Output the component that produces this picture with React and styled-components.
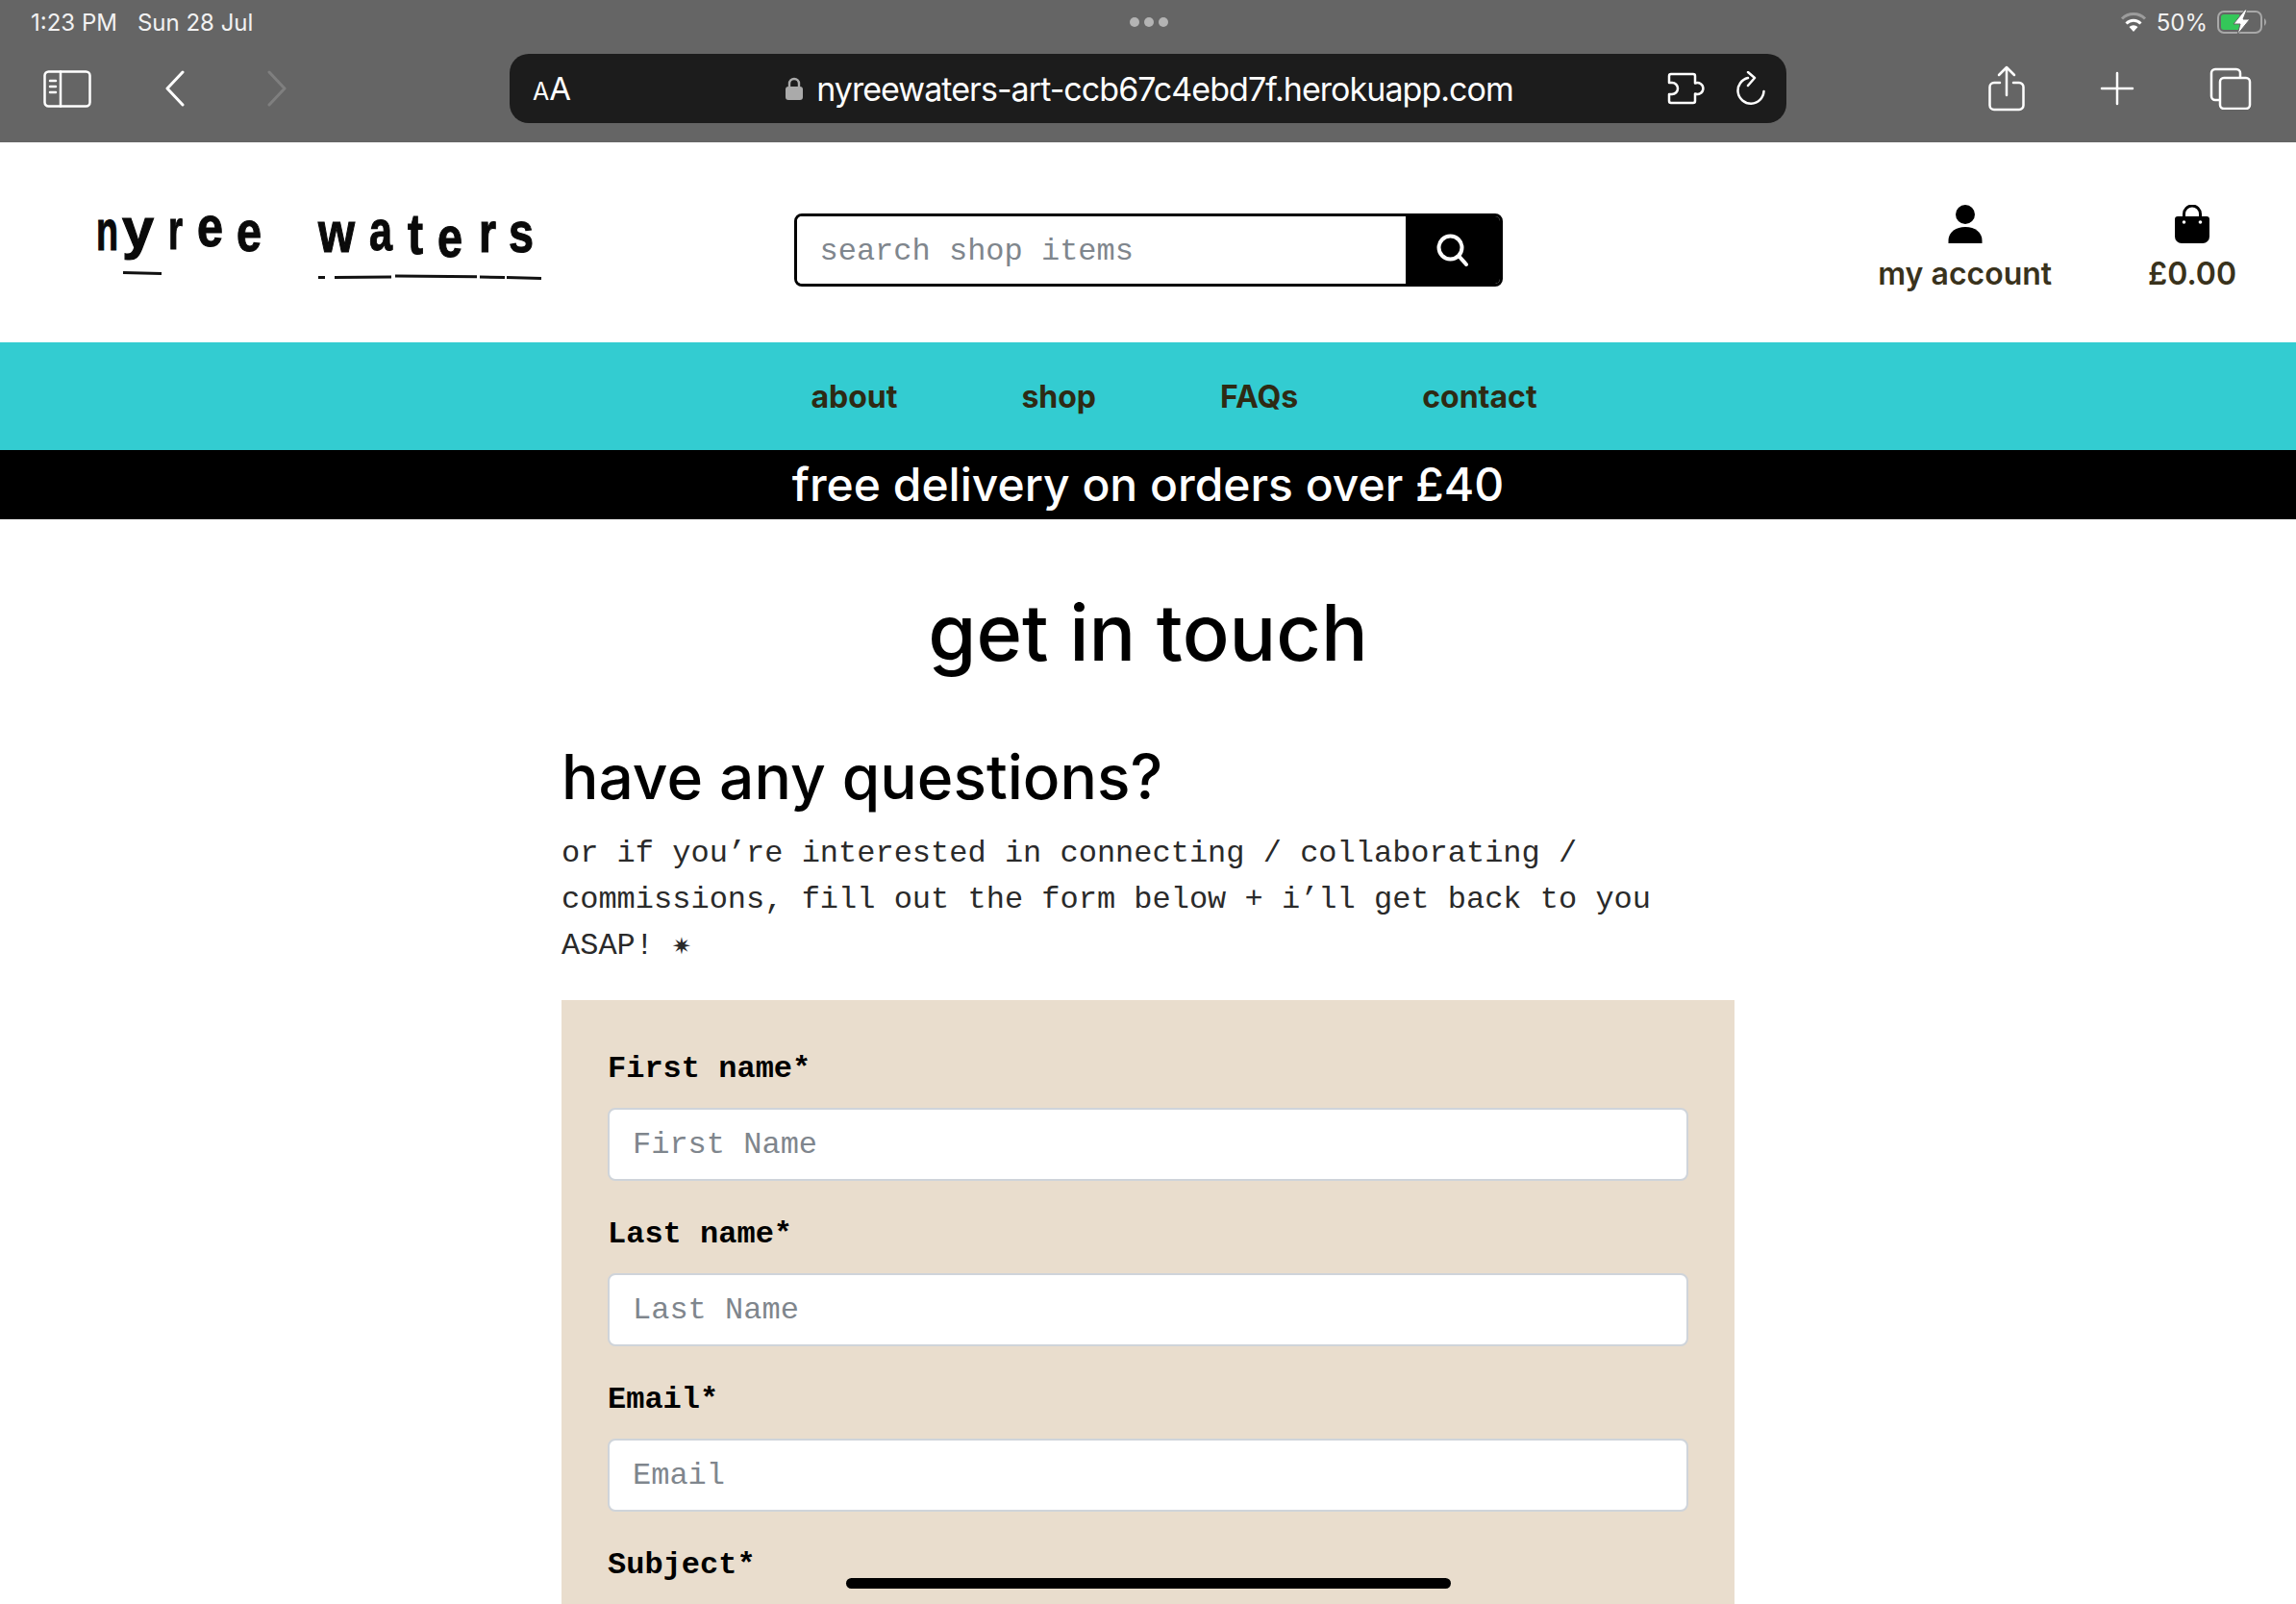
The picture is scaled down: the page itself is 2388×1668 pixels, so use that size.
import React from "react";
import styled, { createGlobalStyle } from "styled-components";

const Global = createGlobalStyle`
  html, body { margin: 0; padding: 0; background: #fff; }
  * { box-sizing: border-box; }
  #root { width: 2388px; height: 1668px; overflow: hidden; position: relative; font-family: Inter, "Liberation Sans", sans-serif; }
`;

const Chrome = styled.div`
  background: #656565;
  height: 148px;
  color: #fff;
`;
const StatusRow = styled.div`
  height: 46px;
  padding: 0 30px 0 32px;
  display: grid;
  grid-template-columns: 1fr auto 1fr;
  align-items: center;
  font-size: 24px;
  color: #f2f2f2;
`;
const StatusLeft = styled.div`
  display: flex;
  gap: 21px;
`;
const StatusRight = styled.div`
  display: flex;
  justify-content: flex-end;
  align-items: center;
  gap: 10px;
`;
const Dots = styled.div`
  display: flex;
  gap: 5px;
`;
const Dot = styled.span`
  width: 10px;
  height: 10px;
  border-radius: 50%;
  background: #b4b4b4;
`;
const Toolbar = styled.div`
  margin-top: 10px;
  height: 72px;
  display: grid;
  grid-template-columns: 1fr 1328px 1fr;
  align-items: center;
`;
const ToolLeft = styled.div`
  display: flex;
  align-items: center;
  padding-left: 45px;
`;
const ToolRight = styled.div`
  display: flex;
  align-items: center;
  justify-content: flex-end;
  gap: 78px;
  padding-right: 46px;
`;
const IconSlot = styled.span`
  display: flex;
  margin-left: ${(p) => p.$ml || 0}px;
`;
const UrlBar = styled.div`
  height: 72px;
  border-radius: 20px;
  background: #1c1c1c;
  display: grid;
  grid-template-columns: 1fr auto 1fr;
  align-items: center;
  padding: 0 22px 0 24px;
`;
const Aa = styled.div`
  display: flex;
  align-items: baseline;
  font-size: 33px;
  line-height: 1;
  span { font-size: 25px; }
`;
const UrlText = styled.div`
  display: flex;
  align-items: center;
  gap: 13px;
  font-size: 34px;
  letter-spacing: -0.95px;
  color: #fff;
  font-weight: 400;
`;
const UrlActions = styled.div`
  display: flex;
  justify-content: flex-end;
  align-items: center;
  gap: 30px;
`;

const Header = styled.header`
  height: 208px;
  display: grid;
  grid-template-columns: 1fr 737px 1fr;
  align-items: start;
  background: #fff;
`;
const LogoWrap = styled.div`
  padding: 40px 0 0 90px;
  svg { display: block; }
`;
const Search = styled.form`
  margin-top: 74px;
  height: 76px;
  display: flex;
  border: 3px solid #000;
  border-radius: 8px;
  overflow: hidden;
`;
const SearchInput = styled.input`
  flex: 1;
  min-width: 0;
  border: 0;
  outline: 0;
  padding: 2px 24px 0;
  font: 32px "Liberation Mono", monospace;
  background: #fff;
  &::placeholder { color: #7f868d; opacity: 1; }
`;
const SearchButton = styled.button`
  width: 98px;
  border: 0;
  padding: 0;
  background: #000;
  display: flex;
  align-items: center;
  justify-content: center;
`;
const Actions = styled.div`
  display: flex;
  justify-content: flex-end;
  gap: 100px;
  padding: 65px 62px 0 0;
`;
const Action = styled.a`
  display: flex;
  flex-direction: column;
  align-items: center;
  gap: 13px;
  font-size: 32px;
  font-weight: 600;
  line-height: 38px;
  color: #39321c;
  svg { display: block; }
`;

const Nav = styled.nav`
  height: 112px;
  background: #33ccd1;
  display: flex;
  justify-content: center;
  align-items: center;
  gap: 129px;
  padding-left: 54px;
`;
const NavLink = styled.a`
  font-size: 32px;
  font-weight: 700;
  color: #2e2a14;
`;
const Banner = styled.div`
  height: 72px;
  background: #000;
  color: #fff;
  font-size: 48px;
  font-weight: 500;
  line-height: 72px;
  text-align: center;
`;

const Main = styled.main`
  width: 1220px;
  margin: 0 auto;
`;
const Title = styled.h1`
  margin: 70px 0 0;
  text-align: center;
  font-size: 81px;
  line-height: 96px;
  font-weight: 500;
  color: #000;
`;
const Subtitle = styled.h2`
  margin: 64px 0 0;
  font-size: 64px;
  line-height: 76px;
  font-weight: 500;
  color: #000;
`;
const Lead = styled.p`
  margin: 18px 0 0;
  font: 32px/48px "Liberation Mono", monospace;
  color: #2a2a2a;
  max-width: 1160px;
`;
const FormCard = styled.form`
  margin-top: 32px;
  background: #e9ddcd;
  padding: 48px;
  height: 800px;
`;
const Field = styled.div`
  margin-bottom: 32px;
`;
const Label = styled.label`
  display: block;
  margin-bottom: 16px;
  font: 700 32px/48px "Liberation Mono", monospace;
  color: #000;
`;
const TextInput = styled.input`
  display: block;
  width: 100%;
  height: 76px;
  padding: 0 24px;
  border: 2px solid #cfd4da;
  border-radius: 8px;
  background: #fff;
  outline: 0;
  font: 32px "Liberation Mono", monospace;
  &::placeholder { color: #7f868d; opacity: 1; }
`;
const HomeBar = styled.div`
  position: absolute;
  left: 880px;
  top: 1641px;
  width: 629px;
  height: 11px;
  border-radius: 6px;
  background: #000;
`;

const LS = { fill: "none", stroke: "#fff", strokeLinecap: "round", strokeLinejoin: "round" };

const SidebarIcon = () => (
  <svg width="50" height="39" viewBox="0 0 50 39" {...LS} strokeWidth="2.5">
    <rect x="1.5" y="1.5" width="47" height="36" rx="4" />
    <path d="M18 1.5v36M7 11h6M7 17h6M7 23h6" />
  </svg>
);
const BackIcon = ({ faded }) => (
  <svg width="20" height="38" viewBox="0 0 20 38" {...LS} strokeWidth="3" stroke={faded ? "#7f7f7f" : "#fff"}>
    {faded ? <path d="M2 2l16 17L2 36" /> : <path d="M18 2L2 19l16 17" />}
  </svg>
);
const PuzzleIcon = () => (
  <svg width="42" height="34" viewBox="0 0 42 34" {...LS} strokeWidth="2.5">
    <path d="M4 2H27a2 2 0 0 1 2 2V11.500a6 6 0 1 1 0 11V30a2 2 0 0 1-2 2H4a2 2 0 0 1-2-2V23H5a6 6 0 0 0 0-12H2V4a2 2 0 0 1 2-2z" />
  </svg>
);
const RefreshIcon = () => (
  <svg width="30" height="36" viewBox="0 0 30 36" {...LS} strokeWidth="2.5">
    <path d="M12 7a13.500 13.500 0 1 0 16.500 14" />
    <path d="M12 1l7 6-7 8" />
  </svg>
);
const ShareIcon = () => (
  <svg width="38" height="48" viewBox="0 0 38 48" {...LS} strokeWidth="2.5">
    <path d="M12 18H6a4.500 4.500 0 0 0-4.500 4.500v19A4.500 4.500 0 0 0 6 46h26a4.500 4.500 0 0 0 4.500-4.500v-19A4.500 4.500 0 0 0 32 18h-6" />
    <path d="M19 31V2M11 10l8-8 8 8" />
  </svg>
);
const PlusIcon = () => (
  <svg width="36" height="36" viewBox="0 0 36 36" {...LS} strokeWidth="2.5">
    <path d="M18 2v32M2 18h32" />
  </svg>
);
const TabsIcon = () => (
  <svg width="44" height="44" viewBox="0 0 44 44" {...LS} strokeWidth="2.5">
    <path d="M10 34H6a4 4 0 0 1-4-4V6a4 4 0 0 1 4-4h22a4 4 0 0 1 4 4v4" />
    <rect x="11" y="11" width="31" height="32" rx="4" />
  </svg>
);
const LockIcon = () => (
  <svg width="20" height="24" viewBox="0 0 20 24">
    <rect x="1" y="10" width="18" height="14" rx="3" fill="#aaa" />
    <path d="M5 11V7a5 5 0 0 1 10 0v4" fill="none" stroke="#aaa" strokeWidth="2.400" />
  </svg>
);
const WifiIcon = () => (
  <svg width="28" height="20" viewBox="0 0 28 20">
    <path d="M14 20l-4.500-5a6.500 6.500 0 0 1 9 0z" fill="#fff" />
    <path d="M6.500 11.500a10.500 10.500 0 0 1 15 0" fill="none" stroke="#fff" strokeWidth="3" />
    <path d="M2 6.500a17 17 0 0 1 24 0" fill="none" stroke="#9c9c9c" strokeWidth="3" />
  </svg>
);
const BatteryIcon = () => (
  <svg width="52" height="26" viewBox="0 0 52 26">
    <rect x="1" y="2" width="45" height="22" rx="6" fill="none" stroke="#a8a8a8" strokeWidth="2" />
    <path d="M4 8a3 3 0 0 1 3-3h16v16H7a3 3 0 0 1-3-3z" fill="#34c759" />
    <path d="M49 9a5 5 0 0 1 0 8z" fill="#a8a8a8" />
    <path d="M29 0L17 15h7l-3 11 13-16h-7l4-10z" fill="#fff" stroke="#656565" strokeWidth="1" />
  </svg>
);
const SearchIcon = () => (
  <svg width="34" height="34" viewBox="0 0 34 34" fill="none" stroke="#fff" strokeWidth="4" strokeLinecap="round">
    <circle cx="14.500" cy="14.500" r="12" />
    <path d="M23.500 23.500L31 32" />
  </svg>
);
const PersonIcon = () => (
  <svg width="36" height="40" viewBox="0 0 36 40" fill="#000">
    <circle cx="18" cy="10" r="10" />
    <path d="M0.500 37c0-8 7-14 17.500-14s17.500 6 17.500 14v3H0.500z" />
  </svg>
);
const BagIcon = () => (
  <svg width="36" height="40" viewBox="0 0 36 40">
    <path d="M3 12h30a3 3 0 0 1 3 3v18a7 7 0 0 1-7 7H7a7 7 0 0 1-7-7V15a3 3 0 0 1 3-3z" fill="#000" />
    <path d="M9.500 16V9.500a8.500 8.500 0 0 1 17 0V16" fill="none" stroke="#000" strokeWidth="3" />
    <circle cx="9.500" cy="18" r="1.800" fill="#fff" />
    <circle cx="26.500" cy="18" r="1.800" fill="#fff" />
  </svg>
);

const logoLetters = [
  ["n", 10, 72, 23],
  ["y", 37, 70, 33],
  ["r", 85, 71, 15],
  ["e", 115, 68, 27],
  ["e", 156, 73, 26],
  ["w", 241, 74, 38],
  ["a", 294, 72, 24],
  ["t", 334, 76, 16],
  ["e", 365, 79, 26],
  ["r", 408, 74, 18],
  ["s", 439, 74, 26],
];

const Logo = () => (
  <svg width="490" height="125" viewBox="0 0 490 125">
    {logoLetters.map(([ch, x, y, w], i) => (
      <text
        key={i}
        x={x}
        y={y}
        textLength={w}
        lengthAdjust="spacingAndGlyphs"
        fontFamily='"Liberation Sans", sans-serif'
        fontWeight="700"
        fontSize="60"
        fill="#0a0a0a"
        stroke="#0a0a0a"
        strokeWidth="1.2"
      >
        {ch}
      </text>
    ))}
    <path d="M38 95.500l40 1" stroke="#111" strokeWidth="3" fill="none" />
    <path d="M241 100.500h7M258 100.500l59-.5M321 99l85 .8M409 100l26 .5M437 100.500l36 1" stroke="#111" strokeWidth="3" fill="none" />
  </svg>
);

const fields = [
  ["First name*", "First Name"],
  ["Last name*", "Last Name"],
  ["Email*", "Email"],
];

export default function App() {
  return (
    <>
      <Global />
      <Chrome>
        <StatusRow>
          <StatusLeft>
            <span>1:23 PM</span>
            <span>Sun 28 Jul</span>
          </StatusLeft>
          <Dots>
            <Dot />
            <Dot />
            <Dot />
          </Dots>
          <StatusRight>
            <WifiIcon />
            <span>50%</span>
            <BatteryIcon />
          </StatusRight>
        </StatusRow>
        <Toolbar>
          <ToolLeft>
            <SidebarIcon />
            <IconSlot $ml={77}><BackIcon /></IconSlot>
            <IconSlot $ml={86}><BackIcon faded /></IconSlot>
          </ToolLeft>
          <UrlBar>
            <Aa><span>A</span>A</Aa>
            <UrlText>
              <LockIcon />
              nyreewaters-art-ccb67c4ebd7f.herokuapp.com
            </UrlText>
            <UrlActions>
              <PuzzleIcon />
              <RefreshIcon />
            </UrlActions>
          </UrlBar>
          <ToolRight>
            <ShareIcon />
            <PlusIcon />
            <TabsIcon />
          </ToolRight>
        </Toolbar>
      </Chrome>
      <Header>
        <LogoWrap><Logo /></LogoWrap>
        <Search>
          <SearchInput placeholder="search shop items" readOnly />
          <SearchButton type="button" aria-label="search"><SearchIcon /></SearchButton>
        </Search>
        <Actions>
          <Action><PersonIcon />my account</Action>
          <Action><BagIcon />£0.00</Action>
        </Actions>
      </Header>
      <Nav>
        <NavLink>about</NavLink>
        <NavLink>shop</NavLink>
        <NavLink>FAQs</NavLink>
        <NavLink>contact</NavLink>
      </Nav>
      <Banner>free delivery on orders over £40</Banner>
      <Main>
        <Title>get in touch</Title>
        <Subtitle>have any questions?</Subtitle>
        <Lead>
          or if you’re interested in connecting / collaborating / commissions, fill out the form below + i’ll get back to you ASAP! ✷
        </Lead>
        <FormCard>
          {fields.map(([label, ph]) => (
            <Field key={label}>
              <Label>{label}</Label>
              <TextInput placeholder={ph} readOnly />
            </Field>
          ))}
          <Label>Subject*</Label>
        </FormCard>
      </Main>
      <HomeBar />
    </>
  );
}
